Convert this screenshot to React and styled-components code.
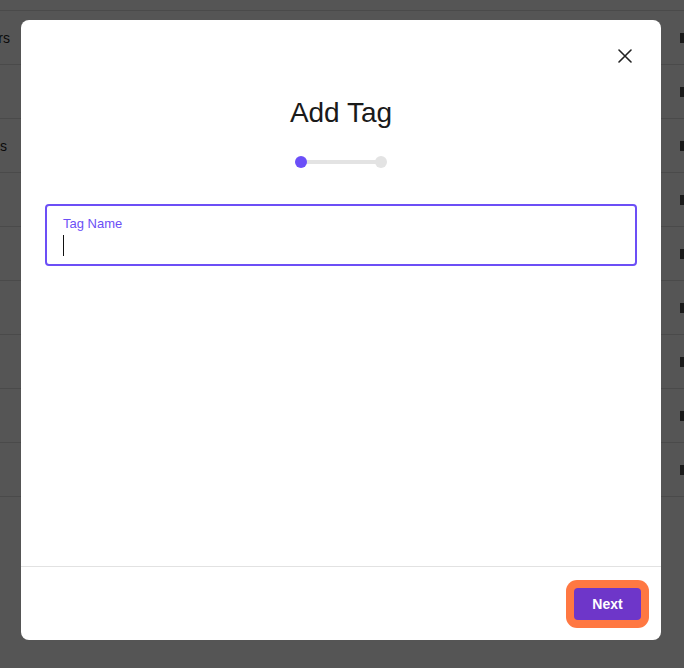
import styled, { createGlobalStyle } from "styled-components";

const GlobalStyle = createGlobalStyle`
  html, body {
    margin: 0;
    padding: 0;
    background: #ffffff;
    font-family: "Liberation Sans", Arial, sans-serif;
  }
`;

const Page = styled.div`
  width: 684px;
  height: 668px;
  overflow: hidden;
`;

const TableHead = styled.div`
  height: 10px;
  border-bottom: 1px solid #dedede;
`;

const Row = styled.div`
  height: 53px;
  border-bottom: 1px solid #dedede;
  display: flex;
  align-items: center;
  justify-content: space-between;
`;

const NameCell = styled.div`
  width: ${(p) => p.$w}px;
  display: flex;
  justify-content: flex-end;
  white-space: nowrap;
  font-size: 14px;
  color: #1e1e1e;
`;

const Action = styled.div`
  width: 10px;
  height: 10px;
  margin-right: -6px;
  background: #4e4e4e;
`;

const Overlay = styled.div`
  position: fixed;
  inset: 0;
  background: rgba(0, 0, 0, 0.667);
  display: flex;
  align-items: flex-start;
  padding: 20px 0 0 21px;
`;

const Modal = styled.div`
  width: 640px;
  height: 620px;
  background: #ffffff;
  border-radius: 8px;
  display: flex;
  flex-direction: column;
  position: relative;
`;

const CloseButton = styled.button`
  position: absolute;
  top: 24px;
  right: 24px;
  width: 24px;
  height: 24px;
  padding: 0;
  border: none;
  background: transparent;
  display: flex;
  align-items: center;
  justify-content: center;
  cursor: pointer;
`;

const Body = styled.div`
  flex: 1;
  padding: 77px 24px 0;
  display: flex;
  flex-direction: column;
  align-items: center;
`;

const Title = styled.h2`
  margin: 0;
  font-size: 28px;
  line-height: 32px;
  font-weight: 400;
  color: #1a1a1a;
`;

const Stepper = styled.div`
  margin-top: 27px;
  width: 92px;
  height: 12px;
  display: flex;
  align-items: center;
`;

const Track = styled.div`
  flex: 1;
  height: 4px;
  background: #e3e3e3;
  margin: 0 -6px;
`;

const Dot = styled.div`
  width: 12px;
  height: 12px;
  border-radius: 50%;
  background: ${(p) => (p.$active ? "#6b4ff8" : "#e3e3e3")};
  position: relative;
  z-index: 1;
`;

const Field = styled.div`
  box-sizing: border-box;
  align-self: stretch;
  margin-top: 36px;
  height: 62px;
  border: 2px solid #6c4ff6;
  border-radius: 4px;
  padding: 10px 16px 0;
  display: flex;
  flex-direction: column;
  gap: 3px;
`;

const Label = styled.label`
  font-size: 13px;
  line-height: 16px;
  color: #6c4ff6;
`;

const Caret = styled.span`
  display: block;
  width: 1px;
  height: 21px;
  background: #111111;
`;

const Footer = styled.div`
  height: 73px;
  border-top: 1px solid #e2e2e2;
  display: flex;
  align-items: center;
  justify-content: flex-end;
  padding: 0 20px;
`;

const NextButton = styled.button`
  width: 67px;
  height: 32px;
  border: none;
  border-radius: 4px;
  background: #6e36c9;
  color: #ffffff;
  font-family: "Liberation Sans", Arial, sans-serif;
  font-size: 14px;
  font-weight: 700;
  box-shadow: 0 0 0 8px #ff7842;
  cursor: pointer;
`;

const rows = [
  { name: "Tag Owners", w: 10 },
  { name: "", w: 10 },
  { name: "Rules", w: 7 },
  { name: "", w: 10 },
  { name: "", w: 10 },
  { name: "", w: 10 },
  { name: "", w: 10 },
  { name: "", w: 10 },
  { name: "", w: 10 },
];

function App() {
  return (
    <>
      <GlobalStyle />
      <Page>
        <TableHead />
        {rows.map((row, i) => (
          <Row key={i}>
            <NameCell $w={row.w}>{row.name}</NameCell>
            <Action />
          </Row>
        ))}
      </Page>
      <Overlay>
        <Modal>
          <CloseButton aria-label="Close">
            <svg width="14" height="14" viewBox="0 0 14 14">
              <path
                d="M1 1L13 13M13 1L1 13"
                stroke="#222"
                strokeWidth="1.6"
                strokeLinecap="round"
              />
            </svg>
          </CloseButton>
          <Body>
            <Title>Add Tag</Title>
            <Stepper>
              <Dot $active />
              <Track />
              <Dot />
            </Stepper>
            <Field>
              <Label>Tag Name</Label>
              <Caret />
            </Field>
          </Body>
          <Footer>
            <NextButton>Next</NextButton>
          </Footer>
        </Modal>
      </Overlay>
    </>
  );
}

export default App;
